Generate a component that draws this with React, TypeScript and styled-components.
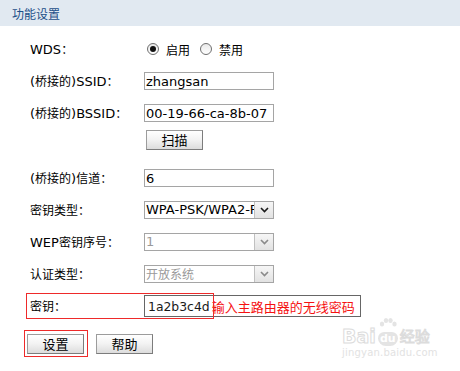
import React from "react";
import styled, { createGlobalStyle } from "styled-components";

const Global = createGlobalStyle`
  html, body { margin: 0; padding: 0; background: #fff; }
  * { box-sizing: border-box; }
`;

const Page = styled.div`
  position: relative;
  width: 460px;
  height: 371px;
  overflow: hidden;
  background: #fff;
  color: #000;
  font-family: "DejaVu Sans", "Noto Sans CJK SC", sans-serif;
  font-size: 13px;
`;

const Header = styled.div`
  height: 26px;
  background: #e1e9f1;
  display: flex;
  align-items: center;
  padding-left: 12px;
`;

const Title = styled.h1`
  margin: 0;
  font-family: "Noto Sans CJK SC", sans-serif;
  font-weight: 400;
  font-size: 12px;
  color: #1c4f88;
`;

const Form = styled.div`
  padding: 7px 0 0 30px;
`;

const Row = styled.div<{ $h?: number }>`
  position: relative;
  display: grid;
  grid-template-columns: 114px 1fr;
  align-items: center;
  height: ${(p) => p.$h ?? 32}px;
`;

const Label = styled.div`
  white-space: nowrap;
  line-height: 16px;
`;

const Cjk = styled.span`
  font-family: "Noto Sans CJK SC", sans-serif;
  font-size: 12px;
`;

const RadioGroup = styled.div`
  display: flex;
  align-items: center;
  padding-left: 3px;
`;

const Radio = styled.span<{ $on?: boolean }>`
  position: relative;
  width: 12px;
  height: 12px;
  border-radius: 50%;
  border: 1px solid #6f6f6f;
  background: linear-gradient(#e9e9e9, #ffffff);
  margin-right: 7px;
  &::after {
    content: "";
    display: ${(p) => (p.$on ? "block" : "none")};
    position: absolute;
    left: 2px;
    top: 2px;
    width: 6px;
    height: 6px;
    border-radius: 50%;
    background: #111;
  }
`;

const RadioText = styled.span`
  font-family: "Noto Sans CJK SC", sans-serif;
  font-size: 12px;
  margin-right: 10px;
`;

const TextInput = styled.input`
  width: 130px;
  height: 18px;
  border: 1px solid #a5a5a5;
  padding: 0 1px;
  margin: 0;
  font-family: "DejaVu Sans", sans-serif;
  font-size: 13px;
  color: #000;
  background: #fff;
  outline: none;
`;

const Select = styled.div<{ $disabled?: boolean }>`
  display: flex;
  width: 130px;
  height: 18px;
  border: 1px solid #a5a5a5;
  background: #fff;
  color: ${(p) => (p.$disabled ? "#9a9a9a" : "#000")};
`;

const SelectText = styled.div`
  flex: 1;
  overflow: hidden;
  white-space: nowrap;
  padding-left: 1px;
  line-height: 16px;
`;

const Arrow = styled.div<{ $disabled?: boolean }>`
  width: 19px;
  height: 16px;
  border-left: 1px solid #c0c0c0;
  background: linear-gradient(#f6f6f6, #e2e2e2);
  display: flex;
  align-items: center;
  justify-content: center;
  color: ${(p) => (p.$disabled ? "#8a8a8a" : "#1a1a1a")};
`;

const Button = styled.button`
  width: 57px;
  height: 20px;
  padding: 0;
  margin: 0;
  border: 1px solid #9c9c9c;
  border-right-color: #7c7c7c;
  border-bottom-color: #7c7c7c;
  background: linear-gradient(#ffffff, #f2f2f2 50%, #dcdcdc);
  font-family: "Noto Sans CJK SC", sans-serif;
  font-size: 13px;
  line-height: 18px;
  color: #000;
`;

const ScanCell = styled.div`
  grid-column: 2;
  align-self: start;
  padding: 1px 0 0 2px;
`;

const KeyField = styled.div`
  display: flex;
  align-items: center;
  width: 217px;
  height: 22px;
  border: 1px solid #666;
  padding-left: 3px;
`;

const KeyValue = styled.span`
  font-family: "DejaVu Sans", sans-serif;
  font-size: 12.4px;
  color: #1a1a1a;
`;

const Hint = styled.span`
  margin-left: 2px;
  font-family: "Noto Sans CJK SC", sans-serif;
  font-size: 13px;
  color: #f51212;
  white-space: nowrap;
`;

const RedMark = styled.div`
  position: absolute;
  left: -4px;
  top: 3px;
  width: 188px;
  height: 26px;
  border: 1px solid #ee2a2a;
  pointer-events: none;
`;

const Actions = styled.div`
  display: flex;
  align-items: center;
  gap: 8px;
  margin: 8px 0 0 -6px;
`;

const Highlight = styled.div`
  border: 1px solid #ee2a2a;
  padding: 3px 3px 2px 2px;
`;

const Watermark = styled.div`
  position: absolute;
  left: 342px;
  top: 314px;
  width: 92px;
  color: #e4e4e4;
  font-family: "DejaVu Sans", sans-serif;
  pointer-events: none;
`;

const MarkTop = styled.div`
  display: flex;
  align-items: flex-end;
  height: 32px;
`;

const MarkBai = styled.span`
  font-size: 19px;
  font-weight: 700;
  line-height: 20px;
  color: #fff;
  -webkit-text-stroke: 1px #dcdcdc;
`;

const MarkDu = styled.span`
  display: flex;
  flex-direction: column;
  align-items: center;
  margin: 0 2px;
`;

const MarkDuBox = styled.span`
  background: #e4e4e4;
  color: #fff;
  font-size: 11px;
  font-weight: 700;
  border-radius: 7px 7px 9px 9px;
  padding: 1px 2px;
  line-height: 12px;
`;

const MarkJy = styled.span`
  font-family: "Noto Sans CJK SC", sans-serif;
  font-size: 15px;
  line-height: 20px;
  color: #fff;
  -webkit-text-stroke: 1px #dcdcdc;
`;

const MarkUrl = styled.div`
  font-size: 10px;
  color: #e2e2e2;
  margin-top: 1px;
  letter-spacing: 0.2px;
`;

const Chevron = () => (
  <svg width="9" height="6" viewBox="0 0 9 6">
    <path d="M1 1 L4.5 4.5 L8 1" fill="none" stroke="currentColor" strokeWidth="1.6" />
  </svg>
);

const Paw = () => (
  <svg width="20" height="14" viewBox="0 0 20 14">
    <g fill="#e4e4e4">
      <ellipse cx="4" cy="6" rx="2.2" ry="2.6" />
      <ellipse cx="8" cy="2.5" rx="2.2" ry="2.5" />
      <ellipse cx="12.5" cy="2.5" rx="2.2" ry="2.5" />
      <ellipse cx="16.5" cy="6" rx="2.2" ry="2.6" />
    </g>
  </svg>
);

export default function App() {
  return (
    <Page>
      <Global />
      <Header>
        <Title>功能设置</Title>
      </Header>
      <Form>
        <Row>
          <Label>WDS<Cjk>：</Cjk></Label>
          <RadioGroup>
            <Radio $on />
            <RadioText>启用</RadioText>
            <Radio />
            <RadioText>禁用</RadioText>
          </RadioGroup>
        </Row>
        <Row>
          <Label>(<Cjk>桥接的</Cjk>)SSID<Cjk>：</Cjk></Label>
          <TextInput readOnly value="zhangsan" />
        </Row>
        <Row>
          <Label>(<Cjk>桥接的</Cjk>)BSSID<Cjk>：</Cjk></Label>
          <TextInput readOnly value="00-19-66-ca-8b-07" />
        </Row>
        <Row $h={33}>
          <ScanCell>
            <Button>扫描</Button>
          </ScanCell>
        </Row>
        <Row>
          <Label>(<Cjk>桥接的</Cjk>)<Cjk>信道：</Cjk></Label>
          <TextInput readOnly value="6" />
        </Row>
        <Row>
          <Label><Cjk>密钥类型：</Cjk></Label>
          <Select>
            <SelectText>WPA-PSK/WPA2-PSK</SelectText>
            <Arrow><Chevron /></Arrow>
          </Select>
        </Row>
        <Row>
          <Label>WEP<Cjk>密钥序号：</Cjk></Label>
          <Select $disabled>
            <SelectText>1</SelectText>
            <Arrow $disabled><Chevron /></Arrow>
          </Select>
        </Row>
        <Row>
          <Label><Cjk>认证类型：</Cjk></Label>
          <Select $disabled>
            <SelectText><Cjk>开放系统</Cjk></SelectText>
            <Arrow $disabled><Chevron /></Arrow>
          </Select>
        </Row>
        <Row>
          <Label><Cjk>密钥：</Cjk></Label>
          <KeyField>
            <KeyValue>1a2b3c4d</KeyValue>
            <Hint>输入主路由器的无线密码</Hint>
          </KeyField>
          <RedMark />
        </Row>
        <Actions>
          <Highlight>
            <Button>设置</Button>
          </Highlight>
          <Button>帮助</Button>
        </Actions>
      </Form>
      <Watermark>
        <MarkTop>
          <MarkBai>Bai</MarkBai>
          <MarkDu>
            <Paw />
            <MarkDuBox>du</MarkDuBox>
          </MarkDu>
          <MarkJy>经验</MarkJy>
        </MarkTop>
        <MarkUrl>jingyan.baidu.com</MarkUrl>
      </Watermark>
    </Page>
  );
}
